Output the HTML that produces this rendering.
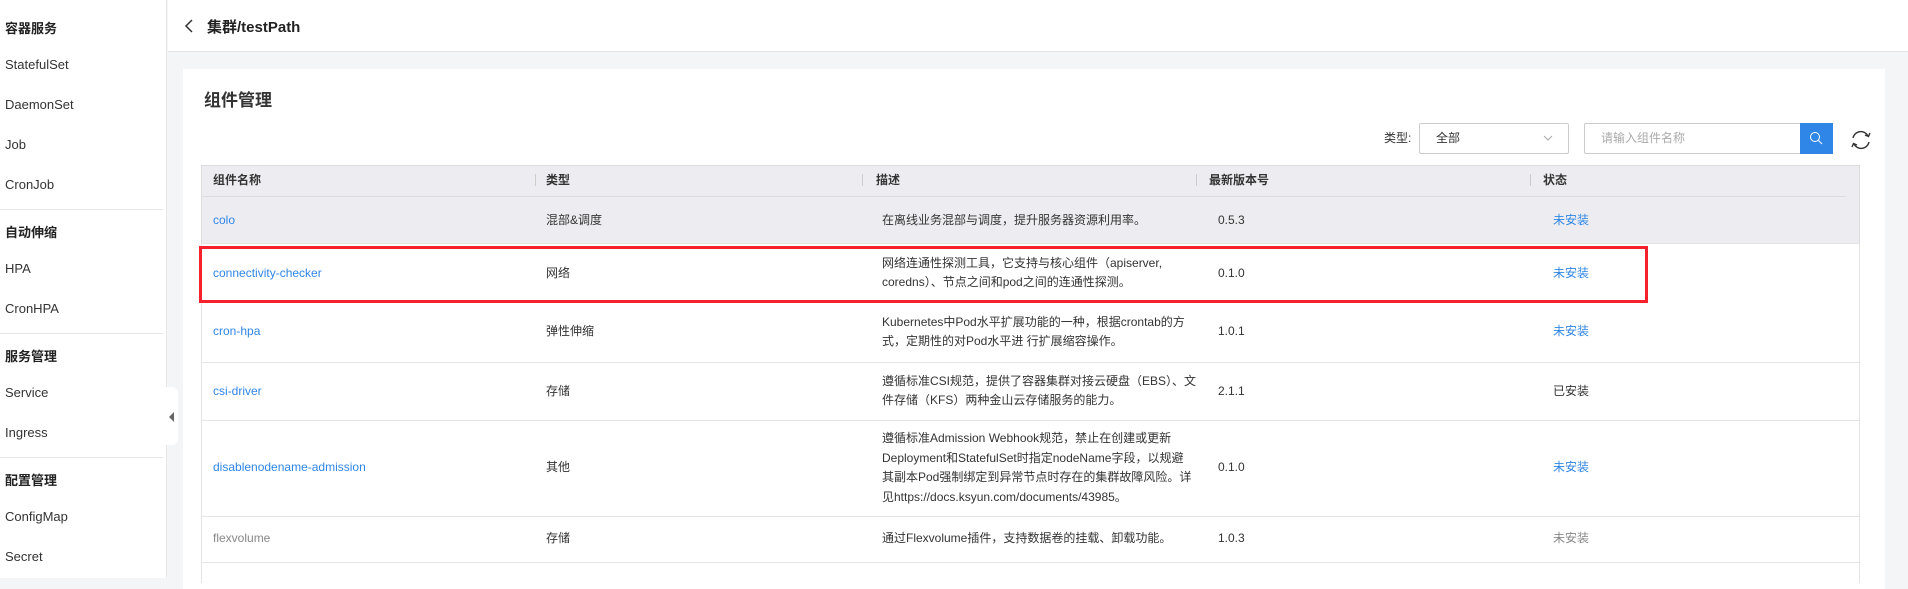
<!DOCTYPE html>
<html><head><meta charset="utf-8"><style>
*{margin:0;padding:0;box-sizing:border-box}
body{width:1908px;height:578px;overflow:hidden;background:#f4f5f7;font-family:"Liberation Sans","Noto Sans CJK SC",sans-serif;color:#333;position:relative}
.a{position:absolute;white-space:nowrap}
#side{position:absolute;left:0;top:0;width:167px;height:578px;background:#fff;border-right:1px solid #e8e8e8}
#side .i{position:absolute;left:5px;font-size:13px;color:#333}
#side .h{font-weight:bold;font-size:13px;color:#222}
#side .d{position:absolute;left:0;width:163px;height:1px;background:#e6e6e6}
#hdr{position:absolute;left:168px;top:0;width:1740px;height:52px;background:#fff;border-bottom:1px solid #e3e3e3}
#card{position:absolute;left:183px;top:69px;width:1702px;height:520px;background:#fff}
.t{font-size:12px;color:#333;line-height:18px}
.b{color:#2f86e6}
.hl{position:absolute;left:201px;width:1659px;height:1px;background:#e4e4e4}
.sep{position:absolute;top:174px;width:1px;height:12px;background:#ccc}
</style></head><body>
<div id="side">
<div class="i h" style="top:18px">容器服务</div>
<div class="i" style="top:57px">StatefulSet</div>
<div class="i" style="top:97px">DaemonSet</div>
<div class="i" style="top:137px">Job</div>
<div class="i" style="top:177px">CronJob</div>
<div class="d" style="top:209px"></div>
<div class="i h" style="top:222px">自动伸缩</div>
<div class="i" style="top:261px">HPA</div>
<div class="i" style="top:301px">CronHPA</div>
<div class="d" style="top:333px"></div>
<div class="i h" style="top:346px">服务管理</div>
<div class="i" style="top:385px">Service</div>
<div class="i" style="top:425px">Ingress</div>
<div class="d" style="top:457px"></div>
<div class="i h" style="top:470px">配置管理</div>
<div class="i" style="top:509px">ConfigMap</div>
<div class="i" style="top:549px">Secret</div>
</div>
<div class="a" style="left:166px;top:387px;width:12px;height:58px;background:#fff;border-radius:0 6px 6px 0"></div>
<div class="a" style="left:169px;top:412px;width:0;height:0;border-top:5px solid transparent;border-bottom:5px solid transparent;border-right:5px solid #666"></div>
<div id="hdr"></div>
<svg class="a" style="left:184px;top:19px" width="10" height="14"><path d="M8 1 L2 7 L8 13" stroke="#333" stroke-width="1.5" fill="none"/></svg>
<div class="a" style="left:207px;top:16px;font-size:15px;font-weight:bold;color:#222">集群/testPath</div>
<div id="card"></div>
<div class="a" style="left:204px;top:86px;font-size:17px;font-weight:bold;color:#333">组件管理</div>
<div class="a t" style="left:1384px;top:129px">类型:</div>
<div class="a" style="left:1419px;top:123px;width:150px;height:31px;border:1px solid #ccc;border-radius:2px;background:#fff"></div>
<div class="a t" style="left:1436px;top:129px">全部</div>
<svg class="a" style="left:1543px;top:134px" width="10" height="8"><path d="M1 2 L5 6 L9 2" stroke="#aaa" fill="none"/></svg>
<div class="a" style="left:1584px;top:123px;width:218px;height:31px;border:1px solid #ccc;border-radius:2px 0 0 2px;background:#fff"></div>
<div class="a t" style="left:1601px;top:129px;color:#aaa">请输入组件名称</div>
<div class="a" style="left:1800px;top:123px;width:33px;height:31px;background:#2f86e6"></div>
<svg class="a" style="left:1809px;top:131px" width="15" height="15"><circle cx="6" cy="6" r="4.5" stroke="#fff" fill="none"/><path d="M9.5 9.5 L13 13" stroke="#fff"/></svg>
<svg class="a" style="left:1849px;top:128px" width="24" height="24"><path d="M4 10 A8 8 0 0 1 19 8" stroke="#333" stroke-width="1.4" fill="none"/><path d="M20 14 A8 8 0 0 1 5 16" stroke="#333" stroke-width="1.4" fill="none"/><path d="M16 7 L19.5 8.5 L21 5" stroke="#333" stroke-width="1.4" fill="none"/><path d="M8 17 L4.5 15.5 L3 19" stroke="#333" stroke-width="1.4" fill="none"/></svg>
<div class="a" style="left:201px;top:165px;width:1659px;height:78px;background:#ededf1;border:1px solid #dcdcdc;border-bottom:none"></div>
<div class="a" style="left:201px;top:243px;width:1px;height:340px;background:#e4e4e4"></div>
<div class="a" style="left:1859px;top:243px;width:1px;height:340px;background:#e4e4e4"></div>
<div class="hl" style="top:196px;width:1645px;background:#dcdcdc"></div>
<div class="hl" style="top:243px"></div>
<div class="hl" style="top:362px"></div>
<div class="hl" style="top:420px"></div>
<div class="hl" style="top:516px"></div>
<div class="hl" style="top:562px"></div>
<div class="sep" style="left:535px"></div><div class="sep" style="left:862px"></div><div class="sep" style="left:1196px"></div><div class="sep" style="left:1530px"></div>
<div class="a t" style="left:213px;top:171px;font-weight:bold">组件名称</div>
<div class="a t" style="left:546px;top:171px;font-weight:bold">类型</div>
<div class="a t" style="left:876px;top:171px;font-weight:bold">描述</div>
<div class="a t" style="left:1209px;top:171px;font-weight:bold">最新版本号</div>
<div class="a t" style="left:1543px;top:171px;font-weight:bold">状态</div>
<!-- colo -->
<div class="a t b" style="left:213px;top:211px">colo</div>
<div class="a t" style="left:546px;top:211px">混部&amp;调度</div>
<div class="a t" style="left:882px;top:211px">在离线业务混部与调度，提升服务器资源利用率。</div>
<div class="a t" style="left:1218px;top:211px">0.5.3</div>
<div class="a t b" style="left:1553px;top:211px">未安装</div>
<!-- connectivity -->
<div class="a" style="left:199px;top:246px;width:1449px;height:57px;border:3px solid #f5222d"></div>
<div class="a t b" style="left:213px;top:264px">connectivity-checker</div>
<div class="a t" style="left:546px;top:264px">网络</div>
<div class="a t" style="left:882px;top:254px;line-height:19px">网络连通性探测工具，它支持与核心组件（apiserver,<br>coredns）、节点之间和pod之间的连通性探测。</div>
<div class="a t" style="left:1218px;top:264px">0.1.0</div>
<div class="a t b" style="left:1553px;top:264px">未安装</div>
<!-- cron-hpa -->
<div class="a t b" style="left:213px;top:322px">cron-hpa</div>
<div class="a t" style="left:546px;top:322px">弹性伸缩</div>
<div class="a t" style="left:882px;top:313px;line-height:19px">Kubernetes中Pod水平扩展功能的一种，根据crontab的方<br>式，定期性的对Pod水平进 行扩展缩容操作。</div>
<div class="a t" style="left:1218px;top:322px">1.0.1</div>
<div class="a t b" style="left:1553px;top:322px">未安装</div>
<!-- csi -->
<div class="a t b" style="left:213px;top:382px">csi-driver</div>
<div class="a t" style="left:546px;top:382px">存储</div>
<div class="a t" style="left:882px;top:372px;line-height:19px">遵循标准CSI规范，提供了容器集群对接云硬盘（EBS）、文<br>件存储（KFS）两种金山云存储服务的能力。</div>
<div class="a t" style="left:1218px;top:382px">2.1.1</div>
<div class="a t" style="left:1553px;top:382px">已安装</div>
<!-- disable -->
<div class="a t b" style="left:213px;top:458px">disablenodename-admission</div>
<div class="a t" style="left:546px;top:458px">其他</div>
<div class="a t" style="left:882px;top:429px;line-height:19.5px">遵循标准Admission Webhook规范，禁止在创建或更新<br>Deployment和StatefulSet时指定nodeName字段，以规避<br>其副本Pod强制绑定到异常节点时存在的集群故障风险。详<br>见https://docs.ksyun.com/documents/43985。</div>
<div class="a t" style="left:1218px;top:458px">0.1.0</div>
<div class="a t b" style="left:1553px;top:458px">未安装</div>
<!-- flexvolume -->
<div class="a t" style="left:213px;top:529px;color:#888">flexvolume</div>
<div class="a t" style="left:546px;top:529px">存储</div>
<div class="a t" style="left:882px;top:529px">通过Flexvolume插件，支持数据卷的挂载、卸载功能。</div>
<div class="a t" style="left:1218px;top:529px">1.0.3</div>
<div class="a t" style="left:1553px;top:529px;color:#888">未安装</div>
</body></html>
